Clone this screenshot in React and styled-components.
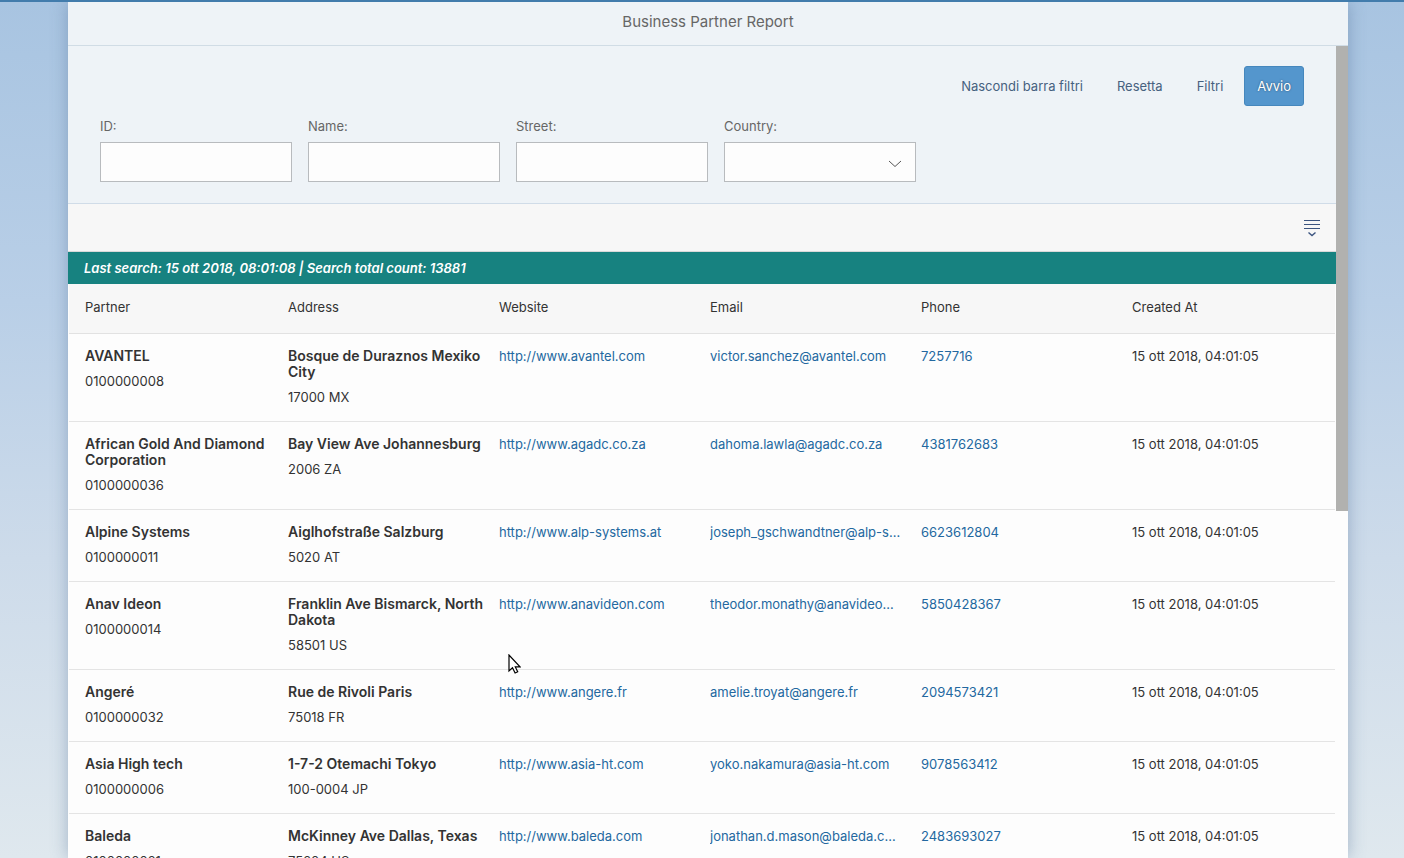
import styled, { createGlobalStyle } from 'styled-components'

const partners = [
  {
    name: 'AVANTEL',
    id: '0100000008',
    address: 'Bosque de Duraznos Mexiko City',
    zip: '17000 MX',
    web: 'http://www.avantel.com',
    email: 'victor.sanchez@avantel.com',
    phone: '7257716',
  },
  {
    name: 'African Gold And Diamond Corporation',
    id: '0100000036',
    address: 'Bay View Ave Johannesburg',
    zip: '2006 ZA',
    web: 'http://www.agadc.co.za',
    email: 'dahoma.lawla@agadc.co.za',
    phone: '4381762683',
  },
  {
    name: 'Alpine Systems',
    id: '0100000011',
    address: 'Aiglhofstraße Salzburg',
    zip: '5020 AT',
    web: 'http://www.alp-systems.at',
    email: 'joseph_gschwandtner@alp-systems.at',
    phone: '6623612804',
  },
  {
    name: 'Anav Ideon',
    id: '0100000014',
    address: 'Franklin Ave Bismarck, North Dakota',
    zip: '58501 US',
    web: 'http://www.anavideon.com',
    email: 'theodor.monathy@anavideon.com',
    phone: '5850428367',
  },
  {
    name: 'Angeré',
    id: '0100000032',
    address: 'Rue de Rivoli Paris',
    zip: '75018 FR',
    web: 'http://www.angere.fr',
    email: 'amelie.troyat@angere.fr',
    phone: '2094573421',
  },
  {
    name: 'Asia High tech',
    id: '0100000006',
    address: '1-7-2 Otemachi Tokyo',
    zip: '100-0004 JP',
    web: 'http://www.asia-ht.com',
    email: 'yoko.nakamura@asia-ht.com',
    phone: '9078563412',
  },
  {
    name: 'Baleda',
    id: '0100000021',
    address: 'McKinney Ave Dallas, Texas',
    zip: '75204 US',
    web: 'http://www.baleda.com',
    email: 'jonathan.d.mason@baleda.com',
    phone: '2483693027',
  },
]

const columns = ['Partner', 'Address', 'Website', 'Email', 'Phone', 'Created At']

function App() {
  return (
    <Shell>
      <GlobalStyle />
      <Panel>
        <TitleBar>
          <h1>Business Partner Report</h1>
        </TitleBar>

        <Body>
          <Content>
            {/* Filters */}
            <FilterBar>
              <Actions>
                <FlatButton type='button'>Nascondi barra filtri</FlatButton>
                <FlatButton type='button'>Resetta</FlatButton>
                <FlatButton type='button'>Filtri</FlatButton>
                <GoButton type='button'>Avvio</GoButton>
              </Actions>
              <Fields>
                <Field>
                  <Label htmlFor='id'>ID:</Label>
                  <Input type='text' id='id' />
                </Field>
                <Field>
                  <Label htmlFor='name'>Name:</Label>
                  <Input type='text' id='name' />
                </Field>
                <Field>
                  <Label htmlFor='street'>Street:</Label>
                  <Input type='text' id='street' />
                </Field>
                <Field>
                  <Label htmlFor='country'>Country:</Label>
                  <SelectBox>
                    <Select id='country' defaultValue=''>
                      <option value=''></option>
                    </Select>
                    <Arrow width='14' height='8' viewBox='0 0 14 8'>
                      <path d='M1 1l6 5.5L13 1' />
                    </Arrow>
                  </SelectBox>
                </Field>
              </Fields>
            </FilterBar>

            {/* Toolbar */}
            <Toolbar>
              <IconButton type='button' aria-label='Group'>
                <svg width='16' height='18' viewBox='0 0 16 18'>
                  <path d='M0 1.5h16M0 5.5h16M0 9.5h16' />
                  <path d='M4.5 13.5l3.5 3 3.5-3' strokeWidth='1.4' />
                </svg>
              </IconButton>
            </Toolbar>

            <Info>Last search: 15 ott 2018, 08:01:08 | Search total count: 13881</Info>

            {/* Partners */}
            <TableBox>
              <Table>
                <thead>
                  <tr>
                    {columns.map((column) => (
                      <HeadCell key={column}>{column}</HeadCell>
                    ))}
                  </tr>
                </thead>
                <tbody>
                  {partners.map((partner) => (
                    <tr key={partner.id}>
                      <Cell>
                        <Strong>{partner.name}</Strong>
                        <Sub>{partner.id}</Sub>
                      </Cell>
                      <Cell>
                        <Strong>{partner.address}</Strong>
                        <Sub>{partner.zip}</Sub>
                      </Cell>
                      <Cell>
                        <Link href={partner.web}>{partner.web}</Link>
                      </Cell>
                      <Cell>
                        <Link href={`mailto:${partner.email}`}>{partner.email}</Link>
                      </Cell>
                      <Cell>
                        <Link href={`tel:${partner.phone}`}>{partner.phone}</Link>
                      </Cell>
                      <Cell>15 ott 2018, 04:01:05</Cell>
                    </tr>
                  ))}
                </tbody>
              </Table>
            </TableBox>
          </Content>
          <ScrollTrack>
            <ScrollThumb />
          </ScrollTrack>
        </Body>
      </Panel>

      <Cursor width='13' height='20' viewBox='0 0 13 20'>
        <path d='M1 1v16l3.5-3.2 2.6 5.2 2.6-1.2-2.4-4.9H12z' />
      </Cursor>
    </Shell>
  )
}

export default App

const GlobalStyle = createGlobalStyle`
  * {
    box-sizing: border-box;
  }

  body {
    margin: 0;
    overflow: hidden;
    color: #333;
    font-family: Inter, 'Liberation Sans', sans-serif;
    font-size: 13px;
    line-height: 16px;
  }

  button, input, select {
    font: inherit;
  }
`;

const Shell = styled.div`
  display: flex;
  height: 100vh;
  padding: 0 56px 0 68px;
  overflow: hidden;
  border-top: 2px solid #427cac;
  background: linear-gradient(to bottom, #a8c4e1, #b9cfe7 35%, #cddbea 65%, #dfe8ee);
`;

const Panel = styled.main`
  display: flex;
  flex: 1;
  flex-direction: column;
  min-width: 0;
  background: #fdfdfd;
  box-shadow: 0 0 16px 0 rgba(70, 100, 140, 0.4);
`;

const TitleBar = styled.header`
  flex: none;
  padding: 10px 16px 13px;
  border-bottom: 1px solid #d0dce5;
  background: #eef3f7;
  text-align: center;

  h1 {
    margin: 0;
    color: #666;
    font-size: 15px;
    font-weight: 400;
    line-height: 20px;
  }
`;

const Body = styled.div`
  display: flex;
  flex: 1;
  min-height: 0;
`;

const Content = styled.div`
  flex: 1;
  min-width: 0;
  overflow: hidden;
`;

const ScrollTrack = styled.div`
  flex: none;
  width: 12px;
`;

const ScrollThumb = styled.div`
  height: 57.3%;
  background: #b1b1af;
`;

const FilterBar = styled.section`
  padding: 20px 32px 21px;
  border-bottom: 1px solid #d0dce8;
  background: #eef3f7;
`;

const Actions = styled.div`
  display: flex;
  justify-content: flex-end;
  gap: 8px;
`;

const FlatButton = styled.button`
  height: 40px;
  padding: 0 13px;
  border: 0;
  border-radius: 3px;
  background: transparent;
  color: #46617f;
`;

const GoButton = styled(FlatButton)`
  padding: 0 12px;
  border: 1px solid #4587bd;
  background: #5496cd;
  color: #fff;
  text-shadow: 0 0 2px rgba(0, 0, 0, 0.5);
`;

const Fields = styled.div`
  display: flex;
  gap: 16px;
  margin-top: 12px;
`;

const Field = styled.div`
  width: 192px;
`;

const Label = styled.label`
  display: block;
  margin-bottom: 8px;
  color: #666;
`;

const Input = styled.input`
  display: block;
  width: 100%;
  height: 40px;
  padding: 0 12px;
  border: 1px solid #b8bbbe;
  border-radius: 0;
  background: #fdfdfd;
`;

const SelectBox = styled.div`
  position: relative;
`;

const Select = styled(Input).attrs({
  as: 'select'
})`
  appearance: none;
`;

const Arrow = styled.svg`
  position: absolute;
  top: 18px;
  right: 14px;
  fill: none;
  stroke: #555;
  pointer-events: none;
`;

const Toolbar = styled.div`
  display: flex;
  align-items: center;
  justify-content: flex-end;
  height: 48px;
  padding: 0 8px;
  border-bottom: 1px solid #d9d9d9;
  background: #f7f7f7;
`;

const IconButton = styled.button`
  display: flex;
  padding: 8px;
  border: 0;
  background: transparent;

  svg {
    fill: none;
    stroke: #3c5580;
  }
`;

const Info = styled.div`
  padding: 8px 16px;
  background: #178280;
  color: #fff;
  font-style: italic;
  font-weight: 600;
`;

const TableBox = styled.div`
  padding: 0 1px;
`;

const Table = styled.table`
  width: 100%;
  border-spacing: 0;
  table-layout: fixed;
`;

const HeadCell = styled.th`
  height: 50px;
  padding: 0 8px 4px;
  border-bottom: 1px solid #e2e2e2;
  background: #f7f7f7;
  font-weight: 400;
  text-align: left;

  &:first-child {
    padding-left: 16px;
  }
`;

const Cell = styled.td`
  padding: 14px 4px 16px 8px;
  border-bottom: 1px solid #e4e4e4;
  vertical-align: top;

  &:first-child {
    padding-left: 16px;
  }
`;

const Strong = styled.div`
  font-size: 14px;
  font-weight: 600;
`;

const Sub = styled.div`
  margin-top: 9px;
`;

const Link = styled.a`
  display: block;
  margin-right: 8px;
  overflow: hidden;
  color: #2368a0;
  text-decoration: none;
  text-overflow: ellipsis;
  white-space: nowrap;
`;

// Mouse pointer floating over the page
const Cursor = styled.svg`
  position: absolute;
  top: 654px;
  left: 508px;
  fill: #fff;
  stroke: #000;
  stroke-width: 1.2;
  pointer-events: none;
`;
